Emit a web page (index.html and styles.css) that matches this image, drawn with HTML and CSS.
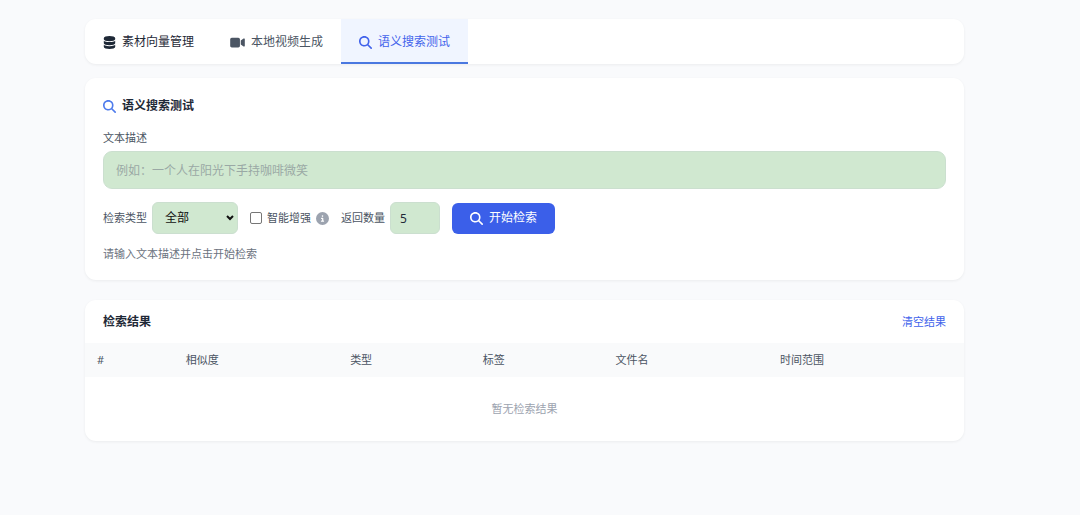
FILE: index.html
```html
<!DOCTYPE html>
<html lang="zh-CN">
<head>
    <meta charset="UTF-8">
    <meta name="viewport" content="width=device-width, initial-scale=1.0">
    <title>语义搜索测试</title>
    <link rel="stylesheet" href="styles.css">
</head>
<body>
    <!-- 图标 -->
    <svg class="icon-defs" aria-hidden="true">
        <symbol id="icon-search" viewBox="0 0 512 512">
            <path d="M416 208c0 45.900-14.900 88.300-40 122.700L502.600 457.400c12.500 12.500 12.500 32.800 0 45.300s-32.800 12.500-45.300 0L330.700 376c-34.400 25.200-76.800 40-122.700 40C93.100 416 0 322.900 0 208S93.100 0 208 0S416 93.100 416 208zM208 352a144 144 0 1 0 0-288 144 144 0 1 0 0 288z"/>
        </symbol>
        <symbol id="icon-database" viewBox="0 0 448 512">
            <path d="M448 80v48c0 44.200-100.300 80-224 80S0 172.200 0 128V80C0 35.800 100.300 0 224 0S448 35.800 448 80zM393.200 214.700c20.800-7.400 39.900-16.900 54.800-28.600V288c0 44.200-100.300 80-224 80S0 332.200 0 288V186.100c14.900 11.800 34 21.200 54.800 28.600C99.700 230.700 159.500 240 224 240s124.300-9.300 169.200-25.300zM0 346.100c14.900 11.800 34 21.200 54.800 28.600C99.700 390.700 159.500 400 224 400s124.300-9.300 169.200-25.300c20.800-7.400 39.900-16.900 54.800-28.600V432c0 44.200-100.300 80-224 80S0 476.200 0 432V346.100z"/>
        </symbol>
        <symbol id="icon-video" viewBox="0 0 576 512">
            <path d="M0 128C0 92.700 28.700 64 64 64H320c35.300 0 64 28.700 64 64V384c0 35.300-28.700 64-64 64H64c-35.300 0-64-28.700-64-64V128zM559.100 99.800c10.400 5.600 16.900 16.400 16.900 28.200V384c0 11.800-6.500 22.600-16.900 28.200s-23 5-32.900-1.600l-96-64L416 337.100V174.900l14.200-9.500 96-64c9.800-6.500 22.400-7.200 32.900-1.600z"/>
        </symbol>
        <symbol id="icon-info" viewBox="0 0 512 512">
            <path d="M256 512A256 256 0 1 0 256 0a256 256 0 1 0 0 512zM216 336h24V272H216c-13.300 0-24-10.700-24-24s10.700-24 24-24h48c13.300 0 24 10.700 24 24v88h8c13.300 0 24 10.700 24 24s-10.700 24-24 24H216c-13.300 0-24-10.700-24-24s10.700-24 24-24zm40-208a32 32 0 1 1 0 64 32 32 0 1 1 0-64z"/>
        </symbol>
    </svg>

    <main class="container">
        <nav class="tabs">
            <button type="button" class="tab tab-dark"><svg class="icon"><use href="#icon-database"/></svg>素材向量管理</button>
            <button type="button" class="tab"><svg class="icon icon-wide"><use href="#icon-video"/></svg>本地视频生成</button>
            <button type="button" class="tab active"><svg class="icon"><use href="#icon-search"/></svg>语义搜索测试</button>
        </nav>

        <section class="card search-card">
            <h2 class="card-title"><svg class="icon"><use href="#icon-search"/></svg>语义搜索测试</h2>
            <form class="search-form" onsubmit="return false">
                <label class="label" for="queryText">文本描述</label>
                <input type="text" id="queryText" class="field query-input" placeholder="例如：一个人在阳光下手持咖啡微笑">

                <div class="options">
                    <div class="option">
                        <label class="label" for="searchType">检索类型</label>
                        <div class="select-wrap">
                            <select id="searchType" class="field">
                                <option>全部</option>
                                <option>视频</option>
                                <option>图片</option>
                            </select>
                            <svg class="arrow" viewBox="0 0 8 6"><path d="M1 1l3 3 3-3"/></svg>
                        </div>
                    </div>
                    <div class="option">
                        <input type="checkbox" id="enhance" class="checkbox">
                        <label class="label" for="enhance">智能增强</label>
                        <svg class="icon info-icon"><use href="#icon-info"/></svg>
                    </div>
                    <div class="option">
                        <label class="label" for="topK">返回数量</label>
                        <input type="number" id="topK" class="field count-input" value="5">
                    </div>
                    <button type="submit" class="search-btn"><svg class="icon"><use href="#icon-search"/></svg>开始检索</button>
                </div>
            </form>
            <p class="hint">请输入文本描述并点击开始检索</p>
        </section>

        <section class="card">
            <div class="result-header">
                <h2 class="card-title">检索结果</h2>
                <a href="#" class="clear-link">清空结果</a>
            </div>
            <table class="result-table">
                <thead>
                    <tr>
                        <th class="col-index">#</th>
                        <th class="col-score">相似度</th>
                        <th class="col-type">类型</th>
                        <th class="col-tag">标签</th>
                        <th class="col-file">文件名</th>
                        <th>时间范围</th>
                    </tr>
                </thead>
                <tbody>
                    <tr>
                        <td colspan="6" class="empty">暂无检索结果</td>
                    </tr>
                </tbody>
            </table>
        </section>
    </main>
</body>
</html>
```
FILE: styles.css
```css
* {
    margin: 0;
    padding: 0;
    box-sizing: border-box;
}

body {
    background-color: #f9fafc;
    color: #1f2937;
    font-family: "Noto Sans", "Noto Sans CJK SC", sans-serif;
    font-size: 12px;
    line-height: 18px;
}

button, input, select {
    font: inherit;
    color: inherit;
}

.icon-defs {
    display: none;
}

.icon {
    width: 13px;
    height: 13px;
    fill: currentColor;
    flex-shrink: 0;
}

.icon-wide {
    width: 15px;
}

.container {
    padding: 19px 116px 24px 85px;
}

.tabs,
.card {
    background: white;
    border-radius: 11px;
    box-shadow: 0 1px 3px rgba(0,0,0,0.06);
    overflow: hidden;
}

.tabs {
    display: flex;
    margin-bottom: 14px;
}

.tab {
    display: flex;
    align-items: center;
    gap: 6px;
    padding: 14px 18px 11px;
    border: none;
    border-bottom: 2px solid transparent;
    background: none;
    color: #4b5563;
    cursor: pointer;
}

.tab-dark {
    color: #1f2937;
}

.tab.active {
    background: #f0f5ff;
    color: #4263eb;
    border-bottom-color: #4a78e0;
}

.card {
    margin-bottom: 20px;
}

.search-card {
    padding: 19px 18px 17px;
}

.card-title {
    display: flex;
    align-items: center;
    gap: 6px;
    font-size: 12px;
    font-weight: 700;
}

.card-title .icon {
    color: #4f7cec;
}

.search-form {
    margin-top: 14px;
}

.label {
    color: #4b5563;
    font-size: 11px;
}

.field {
    background: #d0e8d0;
    border: 1px solid #cbdfcf;
    border-radius: 6px;
    outline: none;
}

.query-input {
    display: block;
    width: 100%;
    height: 38px;
    margin-top: 4px;
    padding: 0 12px;
    border-radius: 9px;
}

.query-input::placeholder {
    color: #9aa8a5;
}

.options {
    display: flex;
    flex-wrap: wrap;
    align-items: center;
    gap: 12px;
    margin-top: 13px;
}

.option {
    display: flex;
    align-items: center;
    gap: 5px;
}

.select-wrap {
    position: relative;
}

.select-wrap select {
    appearance: none;
    display: block;
    width: 86px;
    height: 32px;
    padding: 0 12px;
    color: #111;
}

.arrow {
    position: absolute;
    top: 13px;
    right: 4px;
    width: 8px;
    height: 6px;
    fill: none;
    stroke: #111;
    stroke-width: 2;
    pointer-events: none;
}

.checkbox {
    appearance: none;
    width: 12px;
    height: 12px;
    background: white;
    border: 1px solid #767676;
    border-radius: 2px;
}

.checkbox:checked {
    background: #3b5fe9;
}

.info-icon {
    color: #9ca3af;
}

.count-input {
    width: 50px;
    height: 32px;
    padding: 0 9px;
    appearance: textfield;
}

.search-btn {
    display: flex;
    align-items: center;
    gap: 6px;
    height: 31px;
    padding: 0 18px;
    border: none;
    border-radius: 6px;
    background: #3b5fe9;
    color: white;
    cursor: pointer;
}

.search-btn:hover {
    background: #2f50d0;
}

.hint {
    margin-top: 11px;
    color: #6b7280;
    font-size: 11px;
}

.result-header {
    display: flex;
    justify-content: space-between;
    align-items: center;
    padding: 13px 18px 12px;
}

.clear-link {
    color: #4263eb;
    font-size: 11px;
    text-decoration: none;
}

.result-table {
    width: 100%;
    table-layout: fixed;
    border-collapse: collapse;
    font-size: 11px;
}

.result-table th {
    padding: 8px 12px;
    background: #f9fafb;
    color: #4b5563;
    font-weight: 400;
    text-align: left;
}

.col-index {
    width: 10.1%;
}

.col-score,
.col-file {
    width: 18.7%;
}

.col-type,
.col-tag {
    width: 15.1%;
}

.result-table .empty {
    padding: 23px 12px;
    color: #9ca3af;
    text-align: center;
}
```
